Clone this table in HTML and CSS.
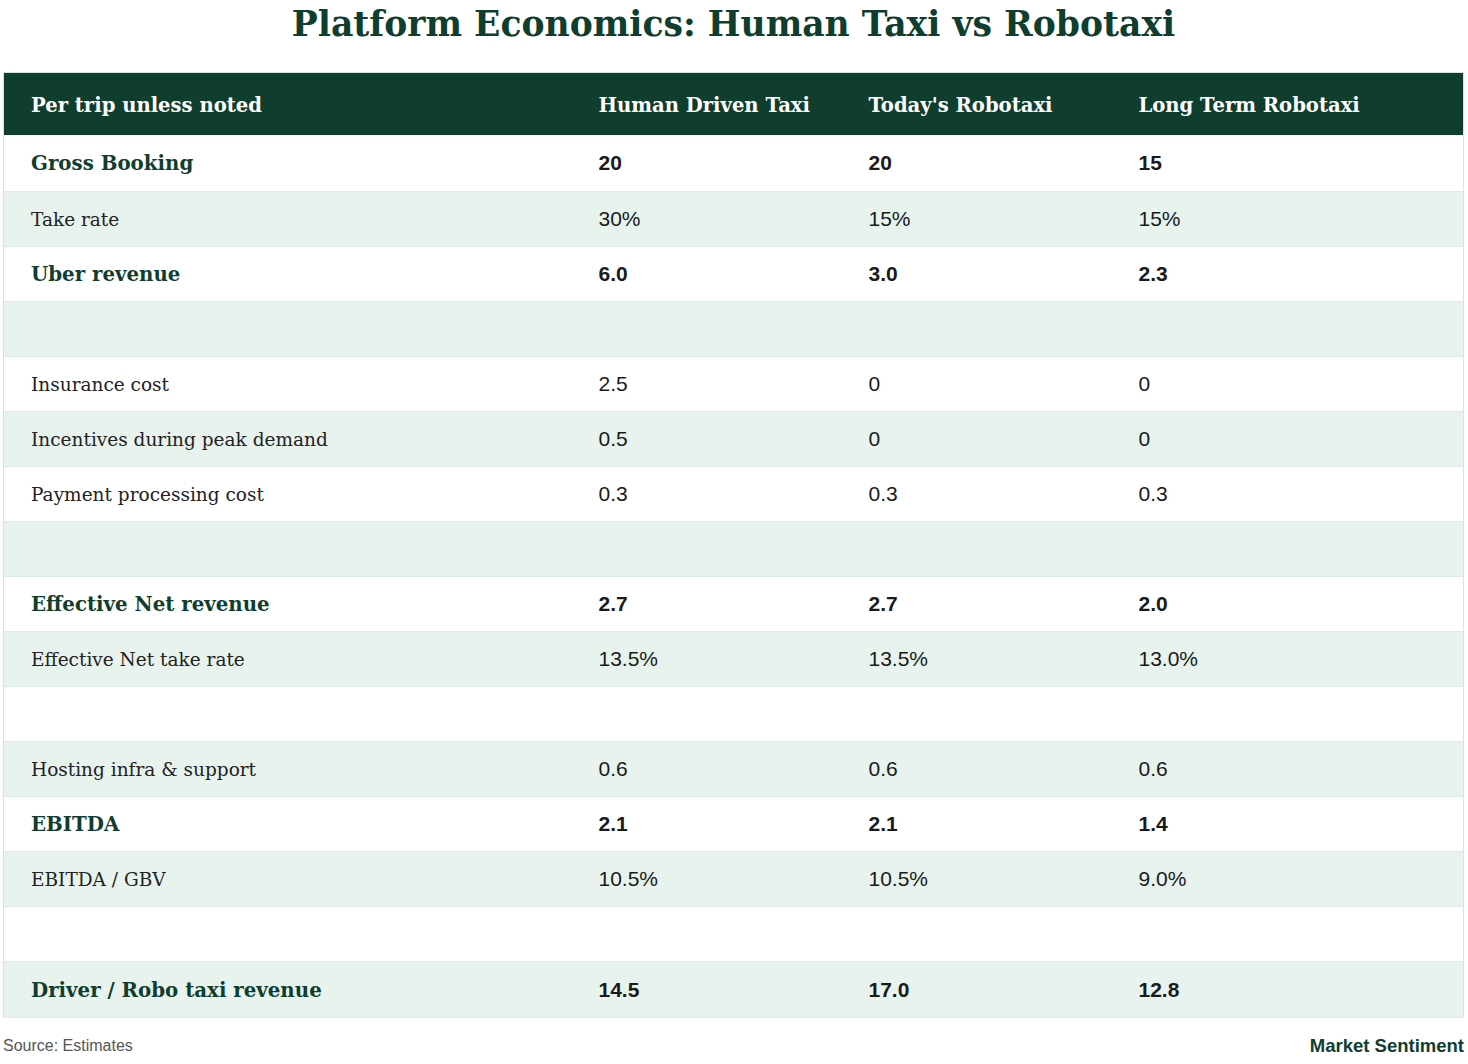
FILE: index.html
```html
<!DOCTYPE html>
<html lang="en">
<head>
<meta charset="utf-8">
<title>Platform Economics: Human Taxi vs Robotaxi</title>
<link rel="stylesheet" href="styles.css">
</head>
<body>
<div class="page">
  <h1 class="title">Platform Economics: Human Taxi vs Robotaxi</h1>
  <table class="econ">
    <colgroup>
      <col class="c-label"><col class="c-num"><col class="c-num"><col>
    </colgroup>
    <thead>
      <tr><th>Per trip unless noted</th><th>Human Driven Taxi</th><th>Today's Robotaxi</th><th>Long Term Robotaxi</th></tr>
    </thead>
    <tbody>
      <tr class="key"><td>Gross Booking</td><td>20</td><td>20</td><td>15</td></tr>
      <tr><td>Take rate</td><td>30%</td><td>15%</td><td>15%</td></tr>
      <tr class="key"><td>Uber revenue</td><td>6.0</td><td>3.0</td><td>2.3</td></tr>
      <tr class="blank"><td></td><td></td><td></td><td></td></tr>
      <tr><td>Insurance cost</td><td>2.5</td><td>0</td><td>0</td></tr>
      <tr><td>Incentives during peak demand</td><td>0.5</td><td>0</td><td>0</td></tr>
      <tr><td>Payment processing cost</td><td>0.3</td><td>0.3</td><td>0.3</td></tr>
      <tr class="blank"><td></td><td></td><td></td><td></td></tr>
      <tr class="key"><td>Effective Net revenue</td><td>2.7</td><td>2.7</td><td>2.0</td></tr>
      <tr><td>Effective Net take rate</td><td>13.5%</td><td>13.5%</td><td>13.0%</td></tr>
      <tr class="blank"><td></td><td></td><td></td><td></td></tr>
      <tr><td>Hosting infra &amp; support</td><td>0.6</td><td>0.6</td><td>0.6</td></tr>
      <tr class="key"><td>EBITDA</td><td>2.1</td><td>2.1</td><td>1.4</td></tr>
      <tr><td>EBITDA / GBV</td><td>10.5%</td><td>10.5%</td><td>9.0%</td></tr>
      <tr class="blank"><td></td><td></td><td></td><td></td></tr>
      <tr class="key"><td>Driver / Robo taxi revenue</td><td>14.5</td><td>17.0</td><td>12.8</td></tr>
    </tbody>
  </table>
  <div class="footer">
    <span class="source">Source: Estimates</span>
    <span class="brand">Market Sentiment</span>
  </div>
</div>
</body>
</html>
```
FILE: styles.css
```css
html, body {
  margin: 0;
  padding: 0;
  background: #ffffff;
}
.page {
  padding: 0 4px 0 3px;
}
.title {
  margin: 0;
  height: 72px;
  padding-top: 2px;
  box-sizing: border-box;
  text-align: center;
  font-family: "DejaVu Serif", Georgia, serif;
  font-weight: bold;
  font-size: 34.6px;
  line-height: 44px;
  color: #0f3d2e;
}
.econ {
  width: 100%;
  border-collapse: collapse;
  table-layout: fixed;
  border: 1px solid #d3e6de;
}
.c-label { width: 568px; }
.c-num { width: 270px; }
.econ th, .econ td {
  text-align: left;
  padding: 0 0 0 27px;
  border-bottom: 1px solid #dcebe5;
  white-space: nowrap;
}
.econ thead tr {
  background: #0f3d2e;
  height: 62px;
}
.econ th {
  color: #ffffff;
  font-family: "DejaVu Serif", Georgia, serif;
  font-weight: bold;
  font-size: 19.6px;
  border-bottom: none;
  padding-top: 3px;
}
.econ tbody tr { height: 55px; }
.econ tbody tr:first-child { height: 57px; }
.econ tbody tr:last-child { height: 56px; }
.econ tbody tr:nth-child(even) { background: #e8f3ee; }
.econ td {
  font-family: "Liberation Sans", Arial, sans-serif;
  font-size: 21px;
  color: #1a1a1a;
}
.econ td:first-child {
  font-family: "DejaVu Serif", Georgia, serif;
  font-size: 18.5px;
  color: #222222;
}
.econ tr.key td { font-weight: bold; color: #1a1a1a; }
.econ tr.key td:first-child { color: #0f3d2e; font-size: 19.8px; }
.footer {
  display: flex;
  justify-content: space-between;
  align-items: center;
  height: 58px;
  padding-bottom: 16px;
  box-sizing: border-box;
  padding-top: 14px;
}
.source {
  font-family: "Liberation Sans", Arial, sans-serif;
  font-size: 16px;
  color: #555555;
}
.brand {
  font-family: "Liberation Sans", Arial, sans-serif;
  font-weight: bold;
  font-size: 18.5px;
  color: #0f3d2e;
}
```
